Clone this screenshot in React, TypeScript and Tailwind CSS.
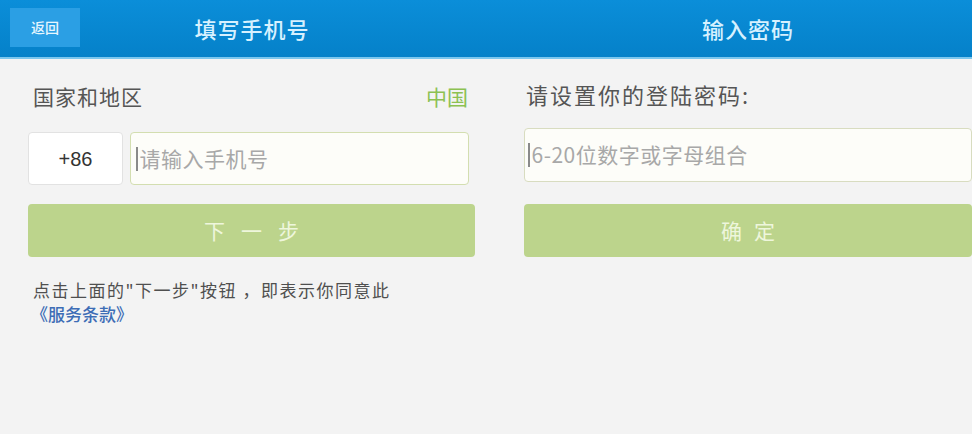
import React from "react";

const cjk = { fontFamily: '"Noto Sans CJK SC", "Noto Sans", sans-serif' };

function Caret() {
  return <span className="inline-block w-[1.5px] h-[24px] bg-[#8a8a8a] mr-[2px]" />;
}

export default function App() {
  return (
    <div className="w-[972px] h-[434px] overflow-hidden bg-[#f3f3f3] flex" style={cjk}>
      {/* Left panel */}
      <div className="w-[500px] shrink-0 flex flex-col">
        <div className="h-[59px] bg-gradient-to-b from-[#0b8ed9] to-[#0581c9] border-b-[2px] border-[#7cc7ee] flex items-center relative">
          <div className="absolute left-[10px] top-[8px] w-[70px] h-[39px] bg-[#2b9fe4] flex items-center justify-center text-[14px] font-medium text-[#e6f6ff]">
            返回
          </div>
          <div className="w-full text-center text-[22px] text-[#d6f1ff] font-medium tracking-[1px] pl-[4px]">填写手机号</div>
        </div>
        <div className="pl-[28px] pr-[25px] flex flex-col">
          <div className="h-[73px] flex items-center justify-between pl-[5px] pr-[7px] pt-[2px]">
            <span className="text-[21px] text-[#555555] tracking-[1px]">国家和地区</span>
            <span className="text-[21px] text-[#8cc152]">中国</span>
          </div>
          <div className="flex gap-[7px] pr-[6px]">
            <div className="w-[95px] h-[53px] bg-white border border-[#e2e2e2] rounded-[4px] flex items-center justify-center text-[20px] text-[#333333]" style={{ fontFamily: '"Liberation Sans", sans-serif' }}>
              +86
            </div>
            <div className="flex-1 h-[53px] bg-[#fdfdf9] border border-[#d3deb0] rounded-[4px] flex items-center pl-[5px] text-[21px] text-[#a8a8a8] tracking-[0.5px]">
              <Caret />
              请输入手机号
            </div>
          </div>
          <div className="mt-[19px] h-[53px] bg-[#bcd48c] rounded-[4px] flex items-center justify-center text-[21px] text-[#eef6dc] tracking-[16px] pl-[16px]">
            下一步
          </div>
          <div className="mt-[21px] pl-[5px] text-[17px] leading-[24px] text-[#4f4f4f]">
            <div className="tracking-[1.5px]">点击上面的"下一步"按钮 ，即表示你同意此</div>
            <div className="text-[#3d6db6] font-medium -ml-[2px]">《服务条款》</div>
          </div>
        </div>
      </div>
      {/* Right panel */}
      <div className="w-[496px] shrink-0 flex flex-col">
        <div className="h-[59px] bg-gradient-to-b from-[#0b8ed9] to-[#0581c9] border-b-[2px] border-[#7cc7ee] flex items-center justify-center">
          <div className="text-[22px] text-[#d6f1ff] font-medium tracking-[1px]">输入密码</div>
        </div>
        <div className="pl-[24px] pr-[24px] flex flex-col">
          <div className="h-[69px] flex items-center pl-[2px] pt-[2px]">
            <span className="text-[22px] text-[#555555] tracking-[2px]">请设置你的登陆密码:</span>
          </div>
          <div className="h-[54px] bg-[#fdfdf9] border border-[#d8dcc0] rounded-[4px] flex items-center pl-[3px] text-[21px] text-[#a8a8a8] tracking-[0.5px]">
            <Caret />
            6-20位数字或字母组合
          </div>
          <div className="mt-[22px] h-[53px] bg-[#bcd48c] rounded-[4px] flex items-center justify-center text-[21px] text-[#eef6dc] tracking-[12px] pl-[12px]">
            确定
          </div>
        </div>
      </div>
    </div>
  );
}
